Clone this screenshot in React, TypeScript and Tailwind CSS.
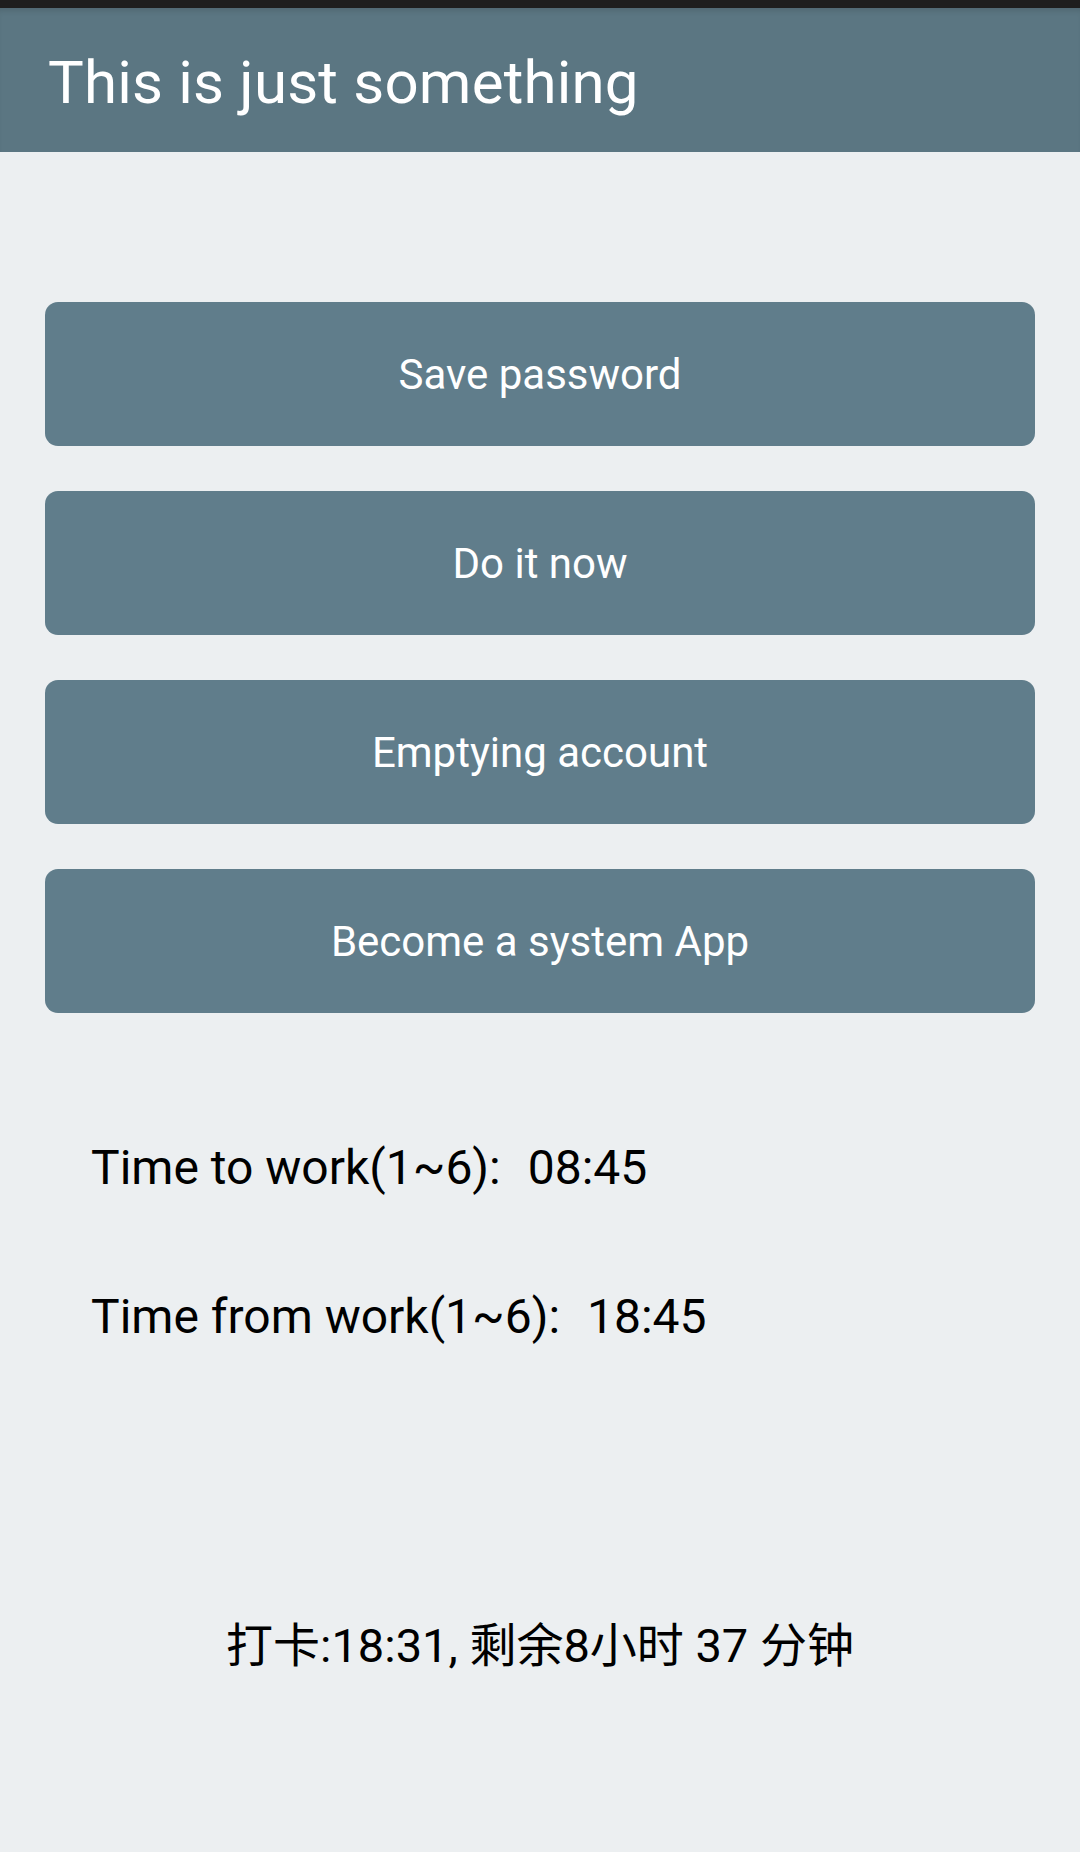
const FONT = "font-['Roboto','Noto_Sans_CJK_SC',sans-serif]";

const buttons = ['Save password', 'Do it now', 'Emptying account', 'Become a system App'];

export default function App() {
  return (
    <div className={`min-h-screen w-[1080px] bg-[#eceff1] ${FONT}`}>
      {/* status bar */}
      <div className="h-[8px] bg-[#1e1e1e]" />

      {/* toolbar */}
      <div className="h-[144px] bg-[#5b7682] pl-[48px] pt-[45px] shadow-[inset_0_6px_6px_-4px_rgba(0,0,0,0.15)]">
        <h1 className="text-[60px] leading-[60px] tracking-[0.2px] text-white">This is just something</h1>
      </div>

      {/* actions */}
      <div className="mt-[150px] flex flex-col gap-[45px] px-[45px]">
        {buttons.map((label) => (
          <button
            key={label}
            className="flex h-[144px] items-center justify-center rounded-[13px] bg-[#607d8b] pt-[2px] text-[42px] leading-none text-white"
          >
            {label}
          </button>
        ))}
      </div>

      {/* work times */}
      <div className="mt-[131px] pl-[91px] text-[48px] leading-[48px] text-black">
        <div className="flex gap-[27px]">
          <span>Time to work(1~6):</span>
          <span>08:45</span>
        </div>
        <div className="mt-[101px] flex gap-[27px]">
          <span>Time from work(1~6):</span>
          <span>18:45</span>
        </div>
      </div>

      <p className="mt-[281px] text-center text-[47px] leading-[48px] text-black">
        打卡:18:31, 剩余8小时 37 分钟
      </p>
    </div>
  );
}
